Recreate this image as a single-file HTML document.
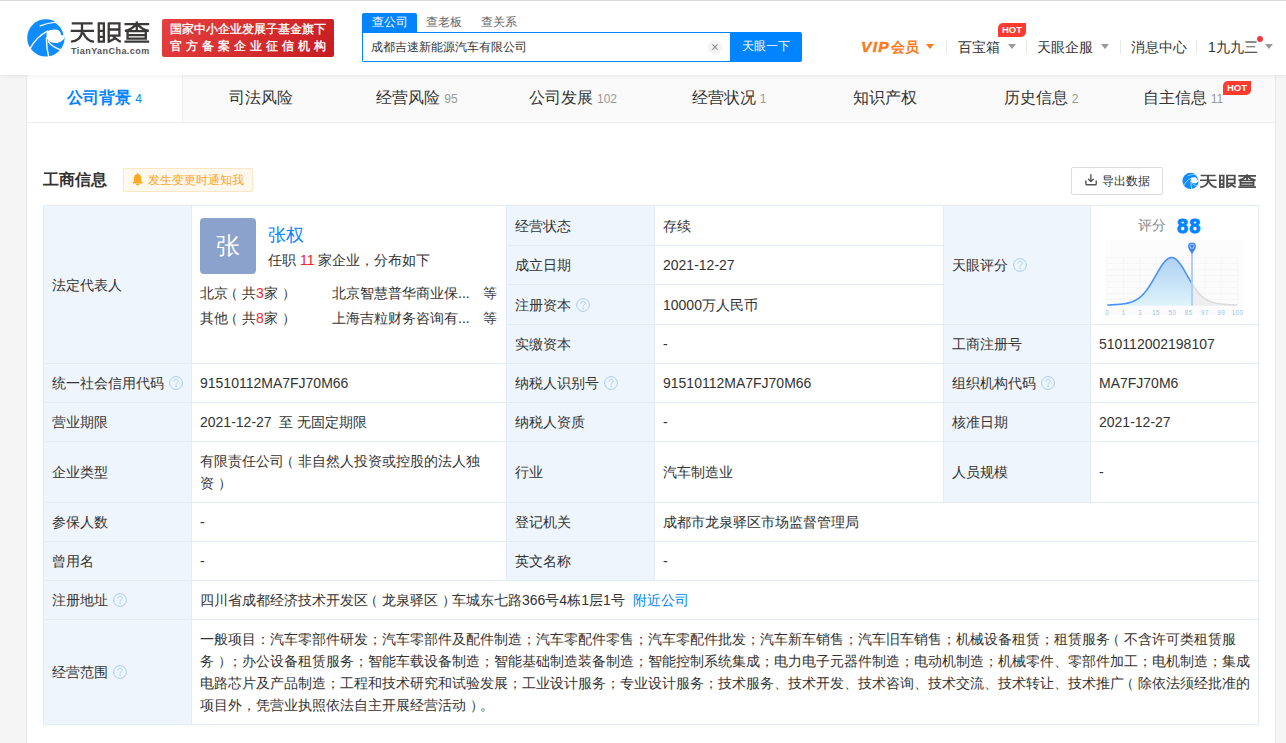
<!DOCTYPE html>
<html><head><meta charset="utf-8">
<style>
*{margin:0;padding:0;box-sizing:border-box}
html,body{width:1286px;height:743px;overflow:hidden;background:#f5f5f5;font-family:"Liberation Sans",sans-serif;color:#333;font-size:14px}
.abs{position:absolute}
#hdr{position:absolute;z-index:5;left:0;top:0;width:1286px;height:75px;background:#fff;box-shadow:inset 0 1px 0 #d9d9d9,0 1px 5px rgba(0,0,0,.07)}
#card{position:absolute;left:26px;top:75px;width:1250px;height:700px;background:#fff;border:1px solid #e8e8e8;border-top:none}
.tab{position:absolute;top:0;height:48px;width:156px;background:#fafafa;border-bottom:1px solid #efefef;text-align:center;font-size:16px;line-height:46px;color:#333}
.tab .n{font-size:12px;color:#999;margin-left:4px}
.tab.on{background:#fff;color:#0084ff;font-weight:bold;border-right:1px solid #ededed}
.tab.on .n{color:#0084ff;font-weight:normal}
.c{position:absolute;border:1px solid #e4ecf5;display:flex;align-items:center;padding:0 8px;line-height:22px;font-size:14px;color:#333}
.c>span.t{display:block}
.l{white-space:nowrap}
.pl{position:relative;left:-4px}.pr{position:relative;left:4px}
.l{background:#eef5fc}
.q{display:inline-block;width:14px;height:14px;margin-left:5px;vertical-align:middle;position:relative;top:-1px}
.nav{position:absolute;top:37px;font-size:14px;line-height:20px;color:#333}
.tri{display:inline-block;width:0;height:0;border-left:4px solid transparent;border-right:4px solid transparent;border-top:5px solid #999;vertical-align:middle;margin-left:8px;position:relative;top:-2px}
.sep{position:absolute;top:40px;width:1px;height:14px;background:#e8e8e8}
</style></head>
<body>
<div id="hdr">
  <!-- logo -->
  <svg class="abs" style="left:24px;top:15px" width="44" height="45" viewBox="0 0 44 45">
    <circle cx="21.9" cy="22.9" r="18.7" fill="#0f8cff"/>
    <path d="M23.5,16.1 C26,14.8 30,13.9 32.9,14.7 C35,15.3 36.6,16.8 37,19.1 L36.8,19.9 L41,20.4 C40.8,23 39.8,24.4 38.6,25.3 C37,26.8 35.5,27.6 33,27.9 C30,28.2 27.2,27.6 25.5,26.6 C24.2,25.7 23.2,24 22.6,22 C22.3,20 22.6,17.6 23.5,16.1 Z" fill="#fff"/>
    <g fill="none" stroke="#fff" stroke-linecap="round">
    <path d="M6.3,33.4 C9.5,27 14,21 23.5,16.1" stroke-width="1.3"/>
    <path d="M22.4,23 Q22.3,33 24.8,42" stroke-width="1.4"/>
    <path d="M24.4,26.6 Q28.5,32.2 37,35" stroke-width="1.4"/>
    <path d="M16.2,10.9 Q23,8.1 31.8,7.2" stroke-width="1.2"/>
    <path d="M31.48,6.96 A18.6,18.6 0 0 1 40.32,20.31" stroke-width="1.7"/>
    </g>
  </svg>
  <svg class="abs" style="left:68px;top:18px" width="87" height="40" viewBox="0 0 1286 591"><g fill="none" stroke="#3b3838" stroke-width="34">
<path d="M55,80 H365 M40,190 H385 M207,80 V190 M207,205 C198,290 130,350 45,350 M222,215 C255,290 300,350 385,350"/>
<path d="M455,80 H530 V350 H455 Z M455,190 H530 M455,280 H530"/>
<path d="M602,80 H760 V260 H602 M602,170 H760 M602,65 V365 M602,352 L700,300 M660,262 C700,300 740,335 780,352"/>
<path d="M835,90 H1200 M1017,50 V200 M1000,100 C960,150 900,180 840,190 M1035,100 C1075,150 1135,180 1195,190 M880,195 H1150 V305 H880 Z M880,252 H1150 M835,350 H1200"/>
</g></svg>
  <div class="abs" style="left:71px;top:46px;font-size:9px;line-height:11px;color:#555;font-weight:bold;letter-spacing:0.45px">TianYanCha.com</div>
  <div class="abs" style="left:162px;top:19px;width:172px;height:38px;border-radius:2px;background:linear-gradient(135deg,#e6403f,#c71b20)">
    <div class="abs" style="left:8px;top:2px;width:158px;color:#fff;font-size:12px;line-height:16px;white-space:nowrap;-webkit-text-stroke:0.35px #fff">国家中小企业发展子基金旗下</div>
    <div class="abs" style="left:8px;top:19px;width:170px;color:#fff;font-size:12px;line-height:16px;letter-spacing:4px;white-space:nowrap;-webkit-text-stroke:0.35px #fff">官方备案企业征信机构</div>
  </div>
  <!-- search -->
  <div class="abs" style="left:362px;top:13px;width:55px;height:20px;background:#0084ff;border-radius:2px 2px 0 0;color:#fff;font-size:12px;line-height:19px;text-align:center">查公司</div>
  <div class="abs" style="left:426px;top:13px;font-size:12px;line-height:19px;color:#666">查老板</div>
  <div class="abs" style="left:481px;top:13px;font-size:12px;line-height:19px;color:#666">查关系</div>
  <div class="abs" style="left:362px;top:32px;width:370px;height:30px;border:1px solid #0084ff;border-right:none;border-radius:0 0 0 2px;background:#fff">
    <div class="abs" style="left:8px;top:5px;font-size:12px;line-height:18px;color:#333">成都吉速新能源汽车有限公司</div>
    <svg class="abs" style="left:345px;top:7px" width="14" height="14" viewBox="0 0 14 14"><circle cx="7" cy="7" r="7" fill="#f3f3f3"/><path d="M4.4,4.4 L9.6,9.6 M9.6,4.4 L4.4,9.6" stroke="#8a8a8a" stroke-width="1.1"/></svg>
  </div>
  <div class="abs" style="left:730px;top:32px;width:72px;height:30px;background:#0084ff;border-radius:0 2px 2px 0;color:#fff;font-size:12px;line-height:28px;text-align:center">天眼一下</div>
  <!-- nav -->
  <div class="nav" style="left:861px;color:#fa7b1e;font-weight:bold;font-size:15px;top:37px;white-space:nowrap"><i style="font-style:italic;letter-spacing:1.3px;-webkit-text-stroke:0.5px #fa7b1e;font-size:15.5px">VIP</i><span style="font-size:14px;margin-left:1px">会员</span><span class="tri" style="border-top-color:#fa7b1e;margin-left:7px;top:-2px"></span></div>
  <div class="sep" style="left:946px"></div>
  <div class="nav" style="left:958px">百宝箱<span class="tri"></span></div>
  <div class="abs" style="left:998px;top:23px;width:28px;height:14px;background:#ff3b30;border-radius:5px 0 5px 0;color:#fff;font-size:9.5px;font-weight:bold;line-height:14px;text-align:center">HOT</div>
  <div class="sep" style="left:1026px"></div>
  <div class="nav" style="left:1037px">天眼企服<span class="tri"></span></div>
  <div class="sep" style="left:1120px"></div>
  <div class="nav" style="left:1131px">消息中心</div>
  <div class="sep" style="left:1196px"></div>
  <div class="nav" style="left:1208px">1九九三<span class="tri" style="margin-left:7px"></span></div>
  <div class="abs" style="left:1257px;top:36px;width:6px;height:6px;border-radius:50%;background:#f03c3c"></div>
</div>

<div id="card">
  <div class="tab on" style="left:0">公司背景<span class="n">4</span></div>
  <div class="tab" style="left:156px">司法风险</div>
  <div class="tab" style="left:312px">经营风险<span class="n">95</span></div>
  <div class="tab" style="left:468px">公司发展<span class="n">102</span></div>
  <div class="tab" style="left:624px">经营状况<span class="n">1</span></div>
  <div class="tab" style="left:780px">知识产权</div>
  <div class="tab" style="left:936px">历史信息<span class="n">2</span></div>
  <div class="tab" style="left:1092px;width:156px;border-right:none">自主信息<span class="n">11</span><span style="display:inline-block;width:28px"></span></div>
</div>
<div class="abs" style="left:1223px;top:81px;width:28px;height:14px;background:#ff3b30;border-radius:5px 0 5px 0;color:#fff;font-size:9.5px;font-weight:bold;line-height:14px;text-align:center">HOT</div>

<!-- section header -->
<div class="abs" style="left:43px;top:169px;font-size:16px;line-height:22px;font-weight:bold;color:#333">工商信息</div>
<div class="abs" style="left:123px;top:168px;width:130px;height:24px;background:#fff8ed;border:1px solid #ffe6c2;border-radius:2px;color:#ffa32a;font-size:12px;line-height:22px;padding-left:24px">发生变更时通知我</div>
<div class="abs" style="left:1071px;top:167px;width:92px;height:28px;border:1px solid #ddd;border-radius:2px;background:#fff;font-size:12px;line-height:26px;padding-left:30px;color:#333">导出数据</div>
<svg class="abs" style="left:1197.8px;top:172.2px" width="62.1" height="25.7" viewBox="0 0 1286 591" preserveAspectRatio="none"><g fill="none" stroke="#4d4d4d" stroke-width="39">
<path d="M55,80 H365 M40,190 H385 M207,80 V190 M207,205 C198,290 130,350 45,350 M222,215 C255,290 300,350 385,350"/>
<path d="M455,80 H530 V350 H455 Z M455,190 H530 M455,280 H530"/>
<path d="M602,80 H760 V260 H602 M602,170 H760 M602,65 V365 M602,352 L700,300 M660,262 C700,300 740,335 780,352"/>
<path d="M835,90 H1200 M1017,50 V200 M1000,100 C960,150 900,180 840,190 M1035,100 C1075,150 1135,180 1195,190 M880,195 H1150 V305 H880 Z M880,252 H1150 M835,350 H1200"/>
</g></svg>
<svg class="abs" style="left:1181px;top:170.5px" width="19.2" height="19.6" viewBox="0 0 44 45">
    <circle cx="21.9" cy="22.9" r="18.7" fill="#0f8cff"/>
    <path d="M23.5,16.1 C26,14.8 30,13.9 32.9,14.7 C35,15.3 36.6,16.8 37,19.1 L36.8,19.9 L41,20.4 C40.8,23 39.8,24.4 38.6,25.3 C37,26.8 35.5,27.6 33,27.9 C30,28.2 27.2,27.6 25.5,26.6 C24.2,25.7 23.2,24 22.6,22 C22.3,20 22.6,17.6 23.5,16.1 Z" fill="#fff"/>
    <g fill="none" stroke="#fff" stroke-linecap="round">
    <path d="M6.3,33.4 C9.5,27 14,21 23.5,16.1" stroke-width="1.3"/>
    <path d="M22.4,23 Q22.3,33 24.8,42" stroke-width="1.4"/>
    <path d="M24.4,26.6 Q28.5,32.2 37,35" stroke-width="1.4"/>
    <path d="M16.2,10.9 Q23,8.1 31.8,7.2" stroke-width="1.2"/>
    <path d="M31.48,6.96 A18.6,18.6 0 0 1 40.32,20.31" stroke-width="1.7"/>
    </g>
  </svg>

<svg class="abs" style="left:128px;top:170px" width="22" height="20" viewBox="0 0 22 20">
<path d="M5.9,12.6 L5.9,8.2 C5.9,5.6 7.5,4.1 9.6,4 C11.7,4.1 13.3,5.6 13.3,8.2 L13.3,12.6 Z" fill="#ffa726"/>
<circle cx="9.6" cy="3.9" r="0.8" fill="#ffa726"/>
<rect x="4.6" y="11.9" width="10.2" height="1.6" rx="0.8" fill="#ffa726"/>
<ellipse cx="9.6" cy="14.6" rx="1.7" ry="0.8" fill="#ffa726"/>
</svg>
<svg class="abs" style="left:1080px;top:170px" width="22" height="20" viewBox="0 0 22 20">
<g fill="none" stroke="#555" stroke-width="1.4" stroke-linecap="round" stroke-linejoin="round">
<path d="M10.9,4.8 L10.9,11.2"/><path d="M8.5,9.3 L10.9,11.6 L13.4,9.3"/>
<path d="M5.9,10.9 L5.9,14 Q5.9,14.8 6.7,14.8 L15.4,14.8 Q16.2,14.8 16.2,14 L16.2,10.9"/>
</g></svg>
<!-- table -->
<div id="tbl">
<div class="c l" style="left:43px;top:205px;width:149px;height:159px;"><span class="t">法定代表人</span></div>
<div class="c" style="left:191px;top:205px;width:316px;height:159px;"><span class="t"><div class="abs" style="left:8px;top:12px;width:56px;height:56px;border-radius:4px;background:#8ba2cc;color:#fff;font-size:24px;line-height:56px;text-align:center">张</div>
<div class="abs" style="left:76px;top:17px;font-size:18px;line-height:24px;color:#0084ff">张权</div>
<div class="abs" style="left:76px;top:44px;font-size:14px;line-height:20px;color:#333">任职 <span style="color:#f5222d">11</span> 家企业，分布如下</div>
<div class="abs" style="left:8px;top:76px;font-size:14px;line-height:22px;color:#333">北京<span class="pl">（</span>共<span style="color:#f5222d">3</span>家<span class="pr">）</span></div>
<div class="abs" style="left:140px;top:76px;font-size:14px;line-height:22px;color:#333">北京智慧普华商业保...</div>
<div class="abs" style="left:291px;top:76px;font-size:14px;line-height:22px;color:#333">等</div>
<div class="abs" style="left:8px;top:101px;font-size:14px;line-height:22px;color:#333">其他<span class="pl">（</span>共<span style="color:#f5222d">8</span>家<span class="pr">）</span></div>
<div class="abs" style="left:140px;top:101px;font-size:14px;line-height:22px;color:#333">上海吉粒财务咨询有...</div>
<div class="abs" style="left:291px;top:101px;font-size:14px;line-height:22px;color:#333">等</div></span></div>
<div class="c l" style="left:506px;top:205px;width:149px;height:41px;"><span class="t">经营状态</span></div>
<div class="c" style="left:654px;top:205px;width:290px;height:41px;"><span class="t">存续</span></div>
<div class="c l" style="left:506px;top:245px;width:149px;height:40px;"><span class="t">成立日期</span></div>
<div class="c" style="left:654px;top:245px;width:290px;height:40px;"><span class="t">2021-12-27</span></div>
<div class="c l" style="left:506px;top:284px;width:149px;height:41px;"><span class="t">注册资本<svg class="q" width="14" height="14" viewBox="0 0 14 14"><circle cx="7" cy="7" r="6.4" fill="none" stroke="#a9cdf0" stroke-width="1"/><path d="M4.9,5.3 C4.9,4 5.9,3.3 7.1,3.3 C8.4,3.3 9.3,4.1 9.3,5.1 C9.3,6.2 8.5,6.7 7.7,7.2 C7.3,7.5 7.1,7.9 7.1,8.4 L7.1,9.1" fill="none" stroke="#a9cdf0" stroke-width="0.9" stroke-linecap="round"/><circle cx="7.1" cy="10.7" r="0.65" fill="#a9cdf0"/></svg></span></div>
<div class="c" style="left:654px;top:284px;width:290px;height:41px;"><span class="t">10000万人民币</span></div>
<div class="c l" style="left:506px;top:324px;width:149px;height:40px;"><span class="t">实缴资本</span></div>
<div class="c" style="left:654px;top:324px;width:290px;height:40px;"><span class="t">-</span></div>
<div class="c l" style="left:943px;top:205px;width:148px;height:120px;"><span class="t">天眼评分<svg class="q" width="14" height="14" viewBox="0 0 14 14"><circle cx="7" cy="7" r="6.4" fill="none" stroke="#a9cdf0" stroke-width="1"/><path d="M4.9,5.3 C4.9,4 5.9,3.3 7.1,3.3 C8.4,3.3 9.3,4.1 9.3,5.1 C9.3,6.2 8.5,6.7 7.7,7.2 C7.3,7.5 7.1,7.9 7.1,8.4 L7.1,9.1" fill="none" stroke="#a9cdf0" stroke-width="0.9" stroke-linecap="round"/><circle cx="7.1" cy="10.7" r="0.65" fill="#a9cdf0"/></svg></span></div>
<div class="c" style="left:1090px;top:205px;width:169px;height:120px;"><span class="t"><svg class="abs" style="left:9px;top:30px" width="150" height="82" viewBox="0 0 150 82"><defs><linearGradient id="gf" x1="0" y1="0" x2="0" y2="1"><stop offset="0" stop-color="#aed0f4"/><stop offset="1" stop-color="#def4fb"/></linearGradient></defs><rect x="5" y="4" width="139" height="75" fill="#fcfcfd"/><g stroke="#f0f0f0" stroke-width="0.5"><line x1="7.30" y1="21.5" x2="7.30" y2="69.5"/><line x1="23.58" y1="21.5" x2="23.58" y2="69.5"/><line x1="39.85" y1="21.5" x2="39.85" y2="69.5"/><line x1="56.12" y1="21.5" x2="56.12" y2="69.5"/><line x1="72.40" y1="21.5" x2="72.40" y2="69.5"/><line x1="88.67" y1="21.5" x2="88.67" y2="69.5"/><line x1="104.95" y1="21.5" x2="104.95" y2="69.5"/><line x1="121.22" y1="21.5" x2="121.22" y2="69.5"/><line x1="137.50" y1="21.5" x2="137.50" y2="69.5"/><line x1="7.30" y1="21.50" x2="137.50" y2="21.50"/><line x1="7.30" y1="27.50" x2="137.50" y2="27.50"/><line x1="7.30" y1="33.50" x2="137.50" y2="33.50"/><line x1="7.30" y1="39.50" x2="137.50" y2="39.50"/><line x1="7.30" y1="45.50" x2="137.50" y2="45.50"/><line x1="7.30" y1="51.50" x2="137.50" y2="51.50"/><line x1="7.30" y1="57.50" x2="137.50" y2="57.50"/><line x1="7.30" y1="63.50" x2="137.50" y2="63.50"/><line x1="7.30" y1="69.50" x2="137.50" y2="69.50"/></g><path d="M7.30,69.01 L8.30,68.97 L9.30,68.93 L10.30,68.88 L11.31,68.84 L12.31,68.79 L13.31,68.73 L14.31,68.67 L15.31,68.61 L16.31,68.54 L17.32,68.46 L18.32,68.38 L19.32,68.29 L20.32,68.19 L21.32,68.09 L22.32,67.97 L23.32,67.83 L24.33,67.69 L25.33,67.52 L26.33,67.34 L27.33,67.13 L28.33,66.90 L29.33,66.64 L30.34,66.36 L31.34,66.04 L32.34,65.68 L33.34,65.28 L34.34,64.83 L35.34,64.33 L36.34,63.78 L37.35,63.18 L38.35,62.51 L39.35,61.77 L40.35,60.97 L41.35,60.09 L42.35,59.13 L43.36,58.10 L44.36,56.99 L45.36,55.80 L46.36,54.53 L47.36,53.18 L48.36,51.76 L49.36,50.26 L50.37,48.70 L51.37,47.08 L52.37,45.41 L53.37,43.70 L54.37,41.96 L55.37,40.20 L56.38,38.44 L57.38,36.68 L58.38,34.95 L59.38,33.26 L60.38,31.62 L61.38,30.05 L62.38,28.58 L63.39,27.20 L64.39,25.95 L65.39,24.83 L66.39,23.85 L67.39,23.04 L68.39,22.38 L69.40,21.91 L70.40,21.61 L71.40,21.50 L72.40,21.57 L73.40,21.83 L74.40,22.27 L75.40,22.89 L76.41,23.67 L77.41,24.62 L78.41,25.71 L79.41,26.94 L80.41,28.29 L81.41,29.75 L82.42,31.29 L83.42,32.92 L84.42,34.60 L85.42,36.33 L86.42,38.08 L87.42,39.84 L88.42,41.61 L89.43,43.35 L90.43,45.07 L91.43,46.75 L92.00,47.68 L92.0,69.5 L7.2999999999999545,69.5 Z" fill="url(#gf)"/><path d="M92.00,47.68 L92.43,48.38 L93.43,49.95 L94.43,51.46 L95.44,52.90 L96.44,54.26 L97.44,55.55 L98.44,56.75 L99.44,57.88 L100.44,58.93 L101.44,59.90 L102.45,60.79 L103.45,61.61 L104.45,62.36 L105.45,63.05 L106.45,63.67 L107.45,64.23 L108.46,64.73 L109.46,65.19 L110.46,65.60 L111.46,65.97 L112.46,66.30 L113.46,66.59 L114.46,66.85 L115.47,67.09 L116.47,67.30 L117.47,67.48 L118.47,67.65 L119.47,67.80 L120.47,67.94 L121.48,68.06 L122.48,68.17 L123.48,68.27 L124.48,68.37 L125.48,68.45 L126.48,68.52 L127.48,68.60 L128.49,68.66 L129.49,68.72 L130.49,68.77 L131.49,68.83 L132.49,68.87 L133.49,68.92 L134.50,68.96 L135.50,69.00 L136.50,69.03 L137.50,69.07 L137.5,69.5 L92.0,69.5 Z" fill="#eeeeee"/><path d="M92.00,47.68 L92.43,48.38 L93.43,49.95 L94.43,51.46 L95.44,52.90 L96.44,54.26 L97.44,55.55 L98.44,56.75 L99.44,57.88 L100.44,58.93 L101.44,59.90 L102.45,60.79 L103.45,61.61 L104.45,62.36 L105.45,63.05 L106.45,63.67 L107.45,64.23 L108.46,64.73 L109.46,65.19 L110.46,65.60 L111.46,65.97 L112.46,66.30 L113.46,66.59 L114.46,66.85 L115.47,67.09 L116.47,67.30 L117.47,67.48 L118.47,67.65 L119.47,67.80 L120.47,67.94 L121.48,68.06 L122.48,68.17 L123.48,68.27 L124.48,68.37 L125.48,68.45 L126.48,68.52 L127.48,68.60 L128.49,68.66 L129.49,68.72 L130.49,68.77 L131.49,68.83 L132.49,68.87 L133.49,68.92 L134.50,68.96 L135.50,69.00 L136.50,69.03 L137.50,69.07" fill="none" stroke="#dcdcdc" stroke-width="1.6"/><path d="M7.30,69.01 L8.30,68.97 L9.30,68.93 L10.30,68.88 L11.31,68.84 L12.31,68.79 L13.31,68.73 L14.31,68.67 L15.31,68.61 L16.31,68.54 L17.32,68.46 L18.32,68.38 L19.32,68.29 L20.32,68.19 L21.32,68.09 L22.32,67.97 L23.32,67.83 L24.33,67.69 L25.33,67.52 L26.33,67.34 L27.33,67.13 L28.33,66.90 L29.33,66.64 L30.34,66.36 L31.34,66.04 L32.34,65.68 L33.34,65.28 L34.34,64.83 L35.34,64.33 L36.34,63.78 L37.35,63.18 L38.35,62.51 L39.35,61.77 L40.35,60.97 L41.35,60.09 L42.35,59.13 L43.36,58.10 L44.36,56.99 L45.36,55.80 L46.36,54.53 L47.36,53.18 L48.36,51.76 L49.36,50.26 L50.37,48.70 L51.37,47.08 L52.37,45.41 L53.37,43.70 L54.37,41.96 L55.37,40.20 L56.38,38.44 L57.38,36.68 L58.38,34.95 L59.38,33.26 L60.38,31.62 L61.38,30.05 L62.38,28.58 L63.39,27.20 L64.39,25.95 L65.39,24.83 L66.39,23.85 L67.39,23.04 L68.39,22.38 L69.40,21.91 L70.40,21.61 L71.40,21.50 L72.40,21.57 L73.40,21.83 L74.40,22.27 L75.40,22.89 L76.41,23.67 L77.41,24.62 L78.41,25.71 L79.41,26.94 L80.41,28.29 L81.41,29.75 L82.42,31.29 L83.42,32.92 L84.42,34.60 L85.42,36.33 L86.42,38.08 L87.42,39.84 L88.42,41.61 L89.43,43.35 L90.43,45.07 L91.43,46.75 L92.00,47.68" fill="none" stroke="#4b93f6" stroke-width="1.6"/><line x1="92.0" y1="16" x2="92.0" y2="69.5" stroke="#b3cdfb" stroke-width="2"/><path d="M88.0,10.5 A4,4 0 1 1 96.0,10.5 Q95.5,13.5 92.0,18.0 Q88.5,13.5 88.0,10.5 Z" fill="#3d86f5"/><circle cx="92.0" cy="10.2" r="2.2" fill="none" stroke="#c9dcff" stroke-width="0.8"/><text x="7.30" y="78.60000000000002" text-anchor="middle" font-size="6.3" fill="#a7bfe6" font-family="Liberation Sans" letter-spacing="0.4">0</text><text x="23.58" y="78.60000000000002" text-anchor="middle" font-size="6.3" fill="#a7bfe6" font-family="Liberation Sans" letter-spacing="0.4">1</text><text x="39.85" y="78.60000000000002" text-anchor="middle" font-size="6.3" fill="#a7bfe6" font-family="Liberation Sans" letter-spacing="0.4">3</text><text x="56.12" y="78.60000000000002" text-anchor="middle" font-size="6.3" fill="#a7bfe6" font-family="Liberation Sans" letter-spacing="0.4">15</text><text x="72.40" y="78.60000000000002" text-anchor="middle" font-size="6.3" fill="#a7bfe6" font-family="Liberation Sans" letter-spacing="0.4">50</text><text x="88.67" y="78.60000000000002" text-anchor="middle" font-size="6.3" fill="#a7bfe6" font-family="Liberation Sans" letter-spacing="0.4">85</text><text x="104.95" y="78.60000000000002" text-anchor="middle" font-size="6.3" fill="#a7bfe6" font-family="Liberation Sans" letter-spacing="0.4">97</text><text x="121.22" y="78.60000000000002" text-anchor="middle" font-size="6.3" fill="#a7bfe6" font-family="Liberation Sans" letter-spacing="0.4">99</text><text x="137.50" y="78.60000000000002" text-anchor="middle" font-size="6.3" fill="#a7bfe6" font-family="Liberation Sans" letter-spacing="0.4">100</text></svg><div class="abs" style="left:47px;top:9px;font-size:14px;line-height:20px;color:#888">评分</div><div class="abs" style="left:86px;top:8px;font-size:20px;line-height:24px;color:#0084ff;font-weight:bold;letter-spacing:1.2px;-webkit-text-stroke:0.9px #0084ff">88</div></span></div>
<div class="c l" style="left:943px;top:324px;width:148px;height:40px;"><span class="t">工商注册号</span></div>
<div class="c" style="left:1090px;top:324px;width:169px;height:40px;"><span class="t">510112002198107</span></div>
<div class="c l" style="left:43px;top:363px;width:149px;height:40px;"><span class="t">统一社会信用代码<svg class="q" width="14" height="14" viewBox="0 0 14 14"><circle cx="7" cy="7" r="6.4" fill="none" stroke="#a9cdf0" stroke-width="1"/><path d="M4.9,5.3 C4.9,4 5.9,3.3 7.1,3.3 C8.4,3.3 9.3,4.1 9.3,5.1 C9.3,6.2 8.5,6.7 7.7,7.2 C7.3,7.5 7.1,7.9 7.1,8.4 L7.1,9.1" fill="none" stroke="#a9cdf0" stroke-width="0.9" stroke-linecap="round"/><circle cx="7.1" cy="10.7" r="0.65" fill="#a9cdf0"/></svg></span></div>
<div class="c" style="left:191px;top:363px;width:316px;height:40px;"><span class="t">91510112MA7FJ70M66</span></div>
<div class="c l" style="left:506px;top:363px;width:149px;height:40px;"><span class="t">纳税人识别号<svg class="q" width="14" height="14" viewBox="0 0 14 14"><circle cx="7" cy="7" r="6.4" fill="none" stroke="#a9cdf0" stroke-width="1"/><path d="M4.9,5.3 C4.9,4 5.9,3.3 7.1,3.3 C8.4,3.3 9.3,4.1 9.3,5.1 C9.3,6.2 8.5,6.7 7.7,7.2 C7.3,7.5 7.1,7.9 7.1,8.4 L7.1,9.1" fill="none" stroke="#a9cdf0" stroke-width="0.9" stroke-linecap="round"/><circle cx="7.1" cy="10.7" r="0.65" fill="#a9cdf0"/></svg></span></div>
<div class="c" style="left:654px;top:363px;width:290px;height:40px;"><span class="t">91510112MA7FJ70M66</span></div>
<div class="c l" style="left:943px;top:363px;width:148px;height:40px;"><span class="t">组织机构代码<svg class="q" width="14" height="14" viewBox="0 0 14 14"><circle cx="7" cy="7" r="6.4" fill="none" stroke="#a9cdf0" stroke-width="1"/><path d="M4.9,5.3 C4.9,4 5.9,3.3 7.1,3.3 C8.4,3.3 9.3,4.1 9.3,5.1 C9.3,6.2 8.5,6.7 7.7,7.2 C7.3,7.5 7.1,7.9 7.1,8.4 L7.1,9.1" fill="none" stroke="#a9cdf0" stroke-width="0.9" stroke-linecap="round"/><circle cx="7.1" cy="10.7" r="0.65" fill="#a9cdf0"/></svg></span></div>
<div class="c" style="left:1090px;top:363px;width:169px;height:40px;"><span class="t">MA7FJ70M6</span></div>
<div class="c l" style="left:43px;top:402px;width:149px;height:40px;"><span class="t">营业期限</span></div>
<div class="c" style="left:191px;top:402px;width:316px;height:40px;"><span class="t">2021-12-27&nbsp; 至 无固定期限</span></div>
<div class="c l" style="left:506px;top:402px;width:149px;height:40px;"><span class="t">纳税人资质</span></div>
<div class="c" style="left:654px;top:402px;width:290px;height:40px;"><span class="t">-</span></div>
<div class="c l" style="left:943px;top:402px;width:148px;height:40px;"><span class="t">核准日期</span></div>
<div class="c" style="left:1090px;top:402px;width:169px;height:40px;"><span class="t">2021-12-27</span></div>
<div class="c l" style="left:43px;top:441px;width:149px;height:62px;"><span class="t">企业类型</span></div>
<div class="c" style="left:191px;top:441px;width:316px;height:62px;"><span class="t">有限责任公司<span class="pl">（</span>非自然人投资或控股的法人独资<span class="pr">）</span></span></div>
<div class="c l" style="left:506px;top:441px;width:149px;height:62px;"><span class="t">行业</span></div>
<div class="c" style="left:654px;top:441px;width:290px;height:62px;"><span class="t">汽车制造业</span></div>
<div class="c l" style="left:943px;top:441px;width:148px;height:62px;"><span class="t">人员规模</span></div>
<div class="c" style="left:1090px;top:441px;width:169px;height:62px;"><span class="t">-</span></div>
<div class="c l" style="left:43px;top:502px;width:149px;height:40px;"><span class="t">参保人数</span></div>
<div class="c" style="left:191px;top:502px;width:316px;height:40px;"><span class="t">-</span></div>
<div class="c l" style="left:506px;top:502px;width:149px;height:40px;"><span class="t">登记机关</span></div>
<div class="c" style="left:654px;top:502px;width:605px;height:40px;"><span class="t">成都市龙泉驿区市场监督管理局</span></div>
<div class="c l" style="left:43px;top:541px;width:149px;height:40px;"><span class="t">曾用名</span></div>
<div class="c" style="left:191px;top:541px;width:316px;height:40px;"><span class="t">-</span></div>
<div class="c l" style="left:506px;top:541px;width:149px;height:40px;"><span class="t">英文名称</span></div>
<div class="c" style="left:654px;top:541px;width:605px;height:40px;"><span class="t">-</span></div>
<div class="c l" style="left:43px;top:580px;width:149px;height:40px;"><span class="t">注册地址<svg class="q" width="14" height="14" viewBox="0 0 14 14"><circle cx="7" cy="7" r="6.4" fill="none" stroke="#a9cdf0" stroke-width="1"/><path d="M4.9,5.3 C4.9,4 5.9,3.3 7.1,3.3 C8.4,3.3 9.3,4.1 9.3,5.1 C9.3,6.2 8.5,6.7 7.7,7.2 C7.3,7.5 7.1,7.9 7.1,8.4 L7.1,9.1" fill="none" stroke="#a9cdf0" stroke-width="0.9" stroke-linecap="round"/><circle cx="7.1" cy="10.7" r="0.65" fill="#a9cdf0"/></svg></span></div>
<div class="c" style="left:191px;top:580px;width:1068px;height:40px;"><span class="t">四川省成都经济技术开发区<span class="pl">（</span>龙泉驿区<span class="pr">）</span>车城东七路366号4栋1层1号<span style="color:#0084ff;margin-left:8px">附近公司</span></span></div>
<div class="c l" style="left:43px;top:619px;width:149px;height:106px;"><span class="t">经营范围<svg class="q" width="14" height="14" viewBox="0 0 14 14"><circle cx="7" cy="7" r="6.4" fill="none" stroke="#a9cdf0" stroke-width="1"/><path d="M4.9,5.3 C4.9,4 5.9,3.3 7.1,3.3 C8.4,3.3 9.3,4.1 9.3,5.1 C9.3,6.2 8.5,6.7 7.7,7.2 C7.3,7.5 7.1,7.9 7.1,8.4 L7.1,9.1" fill="none" stroke="#a9cdf0" stroke-width="0.9" stroke-linecap="round"/><circle cx="7.1" cy="10.7" r="0.65" fill="#a9cdf0"/></svg></span></div>
<div class="c" style="left:191px;top:619px;width:1068px;height:106px;"><span class="t">一般项目：汽车零部件研发；汽车零部件及配件制造；汽车零配件零售；汽车零配件批发；汽车新车销售；汽车旧车销售；机械设备租赁；租赁服务<span class="pl">（</span>不含许可类租赁服务<span class="pr">）</span>；办公设备租赁服务；智能车载设备制造；智能基础制造装备制造；智能控制系统集成；电力电子元器件制造；电动机制造；机械零件、零部件加工；电机制造；集成电路芯片及产品制造；工程和技术研究和试验发展；工业设计服务；专业设计服务；技术服务、技术开发、技术咨询、技术交流、技术转让、技术推广<span class="pl">（</span>除依法须经批准的项目外，凭营业执照依法自主开展经营活动<span class="pr">）</span>。</span></div>
</div>
</body></html>
